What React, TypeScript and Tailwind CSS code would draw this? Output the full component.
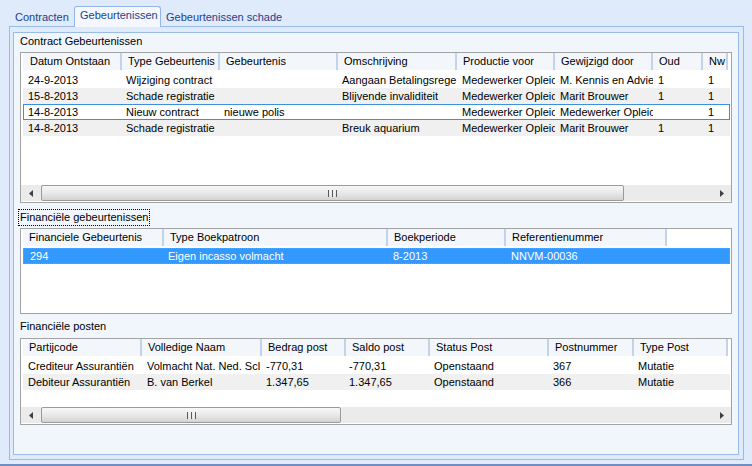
import React from "react";

type Col = { label: string; w: string; hp?: string; dp?: string };
type Row = { cells: string[]; kind?: "alt" | "focus" | "selected" };

// text is cut where the columns cut it in the original list view
const contractCols: Col[] = [
  { label: "Datum Ontstaan", w: "w-[99px]", hp: "pl-[7px]" },
  { label: "Type Gebeurtenis", w: "w-[98px]", dp: "pl-[4px]" },
  { label: "Gebeurtenis", w: "w-[118px]", dp: "pl-[4px]" },
  { label: "Omschrijving", w: "w-[119px]", dp: "pl-[4px]" },
  { label: "Productie voor", w: "w-[98px]" },
  { label: "Gewijzigd door", w: "w-[98px]" },
  { label: "Oud", w: "w-[50px]" },
  { label: "Nw", w: "w-[25px]" },
];

const contractRows: Row[] = [
  { cells: ["24-9-2013", "Wijziging contract", "", "Aangaan Betalingsrege", "Medewerker Opleic", "M. Kennis en Advie", "1", "1"] },
  { cells: ["15-8-2013", "Schade registratie", "", "Blijvende invaliditeit", "Medewerker Opleic", "Marit Brouwer", "1", "1"], kind: "alt" },
  { cells: ["14-8-2013", "Nieuw contract", "nieuwe polis", "", "Medewerker Opleic", "Medewerker Opleic", "", "1"], kind: "focus" },
  { cells: ["14-8-2013", "Schade registratie", "", "Breuk aquarium", "Medewerker Opleic", "Marit Brouwer", "1", "1"], kind: "alt" },
];

const finCols: Col[] = [
  { label: "Financiele Gebeurtenis", w: "w-[141px]", dp: "pl-[7px]" },
  { label: "Type Boekpatroon", w: "w-[224px]", dp: "pl-[4px]" },
  { label: "Boekperiode", w: "w-[118px]" },
  { label: "Referentienummer", w: "w-[161px]" },
];

const finRows: Row[] = [
  { cells: ["294", "Eigen incasso volmacht", "8-2013", "NNVM-00036"], kind: "selected" },
];

const postCols: Col[] = [
  { label: "Partijcode", w: "w-[119px]" },
  { label: "Volledige Naam", w: "w-[120px]" },
  { label: "Bedrag post", w: "w-[84px]", dp: "pl-[4px]" },
  { label: "Saldo post", w: "w-[84px]", dp: "pl-[3px]" },
  { label: "Status Post", w: "w-[119px]", dp: "pl-[4px]" },
  { label: "Postnummer", w: "w-[85px]", dp: "pl-[4px]" },
  { label: "Type Post", w: "w-[94px]", dp: "pl-[4px]" },
];

const postRows: Row[] = [
  { cells: ["Crediteur Assurantiën", "Volmacht Nat. Ned. Scl", "-770,31", "-770,31", "Openstaand", "367", "Mutatie"] },
  { cells: ["Debiteur Assurantiën", "B. van Berkel", "1.347,65", "1.347,65", "Openstaand", "366", "Mutatie"], kind: "alt" },
];

function ScrollBar({ thumb }: { thumb: string }) {
  return (
    <div className="flex h-[16px] shrink-0 items-stretch bg-[#ebebeb]">
      <div className="flex w-[20px] items-center justify-center">
        <svg width="4" height="7" viewBox="0 0 4 7">
          <polygon points="4,0 0,3.5 4,7" fill="#404040" />
        </svg>
      </div>
      <div
        className={`${thumb} flex items-center justify-center rounded-[2px] border border-[#9a9a9a] bg-linear-to-b from-[#f7f7f7] via-[#e9e9e9] to-[#d3d3d3]`}
      >
        <div className="flex h-[7px] gap-[1px]">
          <div className="w-[1px] bg-[#5a5a5a]" />
          <div className="w-[1px] bg-[#f4f4f4]" />
          <div className="w-[1px] bg-[#5a5a5a]" />
          <div className="w-[1px] bg-[#f4f4f4]" />
          <div className="w-[1px] bg-[#5a5a5a]" />
        </div>
      </div>
      <div className="ml-auto flex w-[18px] items-center justify-center">
        <svg width="4" height="7" viewBox="0 0 4 7">
          <polygon points="0,0 4,3.5 0,7" fill="#404040" />
        </svg>
      </div>
    </div>
  );
}

function Grid({
  cols,
  rows,
  height,
  thumb,
}: {
  cols: Col[];
  rows: Row[];
  height: string;
  thumb?: string;
}) {
  return (
    <div className={`${height} flex shrink-0 flex-col border border-[#a3a3a3] bg-white`}>
      <div className="flex-1 overflow-hidden pl-[2px] pr-[1px]">
        <div className="flex h-[17px]">
          {cols.map((c) => (
            <div
              key={c.label}
              className={`${c.w} ${c.hp ?? "pl-[6px]"} shrink-0 overflow-hidden whitespace-nowrap border-r-2 border-[#c2d4ec] bg-[#f3f7fc] leading-[17px]`}
            >
              {c.label}
            </div>
          ))}
        </div>
        <div className="h-[2px]" />
        {rows.map((r, i) => (
          <div
            key={i}
            className={
              "flex h-[16px] leading-[16px] " +
              (r.kind === "alt"
                ? "bg-[#f0f0f0]"
                : r.kind === "focus"
                ? "outline outline-[#3d8fe0] -outline-offset-1"
                : r.kind === "selected"
                ? "bg-[#3399ff] text-white outline-1 outline-dotted outline-[#d98a3d] -outline-offset-1"
                : "")
            }
          >
            {cols.map((c, j) => (
              <div
                key={j}
                className={`${c.w} ${c.dp ?? "pl-[5px]"} shrink-0 overflow-hidden whitespace-nowrap`}
              >
                {r.cells[j]}
              </div>
            ))}
          </div>
        ))}
      </div>
      {thumb && <ScrollBar thumb={thumb} />}
      {thumb && <div className="h-[1px] shrink-0" />}
    </div>
  );
}

export default function App() {
  return (
    <div className="flex h-[466px] w-[752px] flex-col overflow-hidden bg-[#dfeafb] font-['Liberation_Sans',Arial,sans-serif] text-[11px] text-black">
      {/* Tabs */}
      <div className="flex h-[26px] shrink-0 items-end pl-[10px] text-[#1b3f8f]">
        <div className="h-[18px] w-[64px] pl-[5px] leading-[18px]">Contracten</div>
        <div className="relative z-10 -mb-px h-[21px] w-[87px] rounded-t-[3px] border border-b-0 border-[#93b6e6] bg-[#f4f8fe] pl-[5px] pt-[2px] leading-[13px]">
          Gebeurtenissen
        </div>
        <div className="h-[18px] pl-[5px] leading-[18px]">Gebeurtenissen schade</div>
      </div>

      {/* Tab panel */}
      <div className="ml-[9px] mr-[8px] h-[434px] shrink-0 border border-[#99bbe8] pb-[4px] pl-[3px] pr-[4px] pt-[5px]">
        <div className="flex h-full flex-col border border-[#99bbe8] bg-[#f1f6fd] px-[6px]">
          <div className="h-[19px] shrink-0 leading-[17px]">Contract Gebeurtenissen</div>
          <Grid cols={contractCols} rows={contractRows} height="h-[151px]" thumb="w-[583px]" />

          <div className="mt-[6px] h-[17px] w-fit shrink-0 -ml-[2px] whitespace-nowrap border border-dotted border-black px-[1px] leading-[15px]">
            Financiële gebeurtenissen
          </div>
          <div className="mt-[2px]">
            <Grid cols={finCols} rows={finRows} height="h-[86px]" />
          </div>

          <div className="h-[24px] shrink-0 pt-[6px] leading-[13px]">Financiële posten</div>
          <Grid cols={postCols} rows={postRows} height="h-[87px]" thumb="w-[300px]" />
        </div>
      </div>

      <div className="mt-auto h-[2px] shrink-0 bg-[#6f8fc2]" />
    </div>
  );
}
